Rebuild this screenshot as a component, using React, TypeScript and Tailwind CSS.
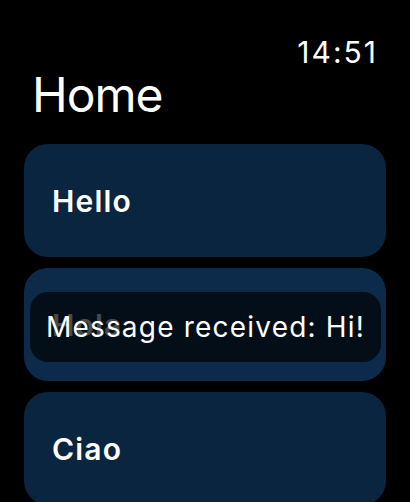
import React from "react";

const font = { fontFamily: "Inter, 'Noto Sans', sans-serif" };

function Card({ label, className }: { label: string; className?: string }) {
  return (
    <div
      className={
        "flex h-[113px] shrink-0 items-center rounded-[24px] px-[28px] " +
        (className ?? "bg-[#0a2540]")
      }
    >
      <span className="text-[30px] font-semibold leading-none tracking-[1.2px] text-white">
        {label}
      </span>
    </div>
  );
}

export default function App() {
  return (
    <div
      className="relative h-[502px] w-[410px] overflow-hidden bg-black text-white"
      style={font}
    >
      <div className="flex justify-end pr-[32px] pt-[37px]">
        <span className="text-[30px] leading-none tracking-[2px]">14:51</span>
      </div>
      <h1 className="mt-[4px] pl-[32px] text-[48px] font-normal leading-none tracking-[-1px]">
        Home
      </h1>

      <div className="mt-[25px] flex flex-col gap-[11px] px-[24px]">
        <Card label="Hello" />
        <div className="relative">
          <Card label="Hola" className="bg-[#0c2b4a]" />
          {/* toast over the second row */}
          <div className="absolute left-[6px] right-[5px] top-[24px] flex h-[70px] items-center justify-center rounded-[18px] bg-[#010305]/[0.72]">
            <span className="text-[28px] leading-none tracking-[1.2px] text-white">
              Message received: Hi!
            </span>
          </div>
        </div>
        <Card label="Ciao" />
      </div>
    </div>
  );
}
